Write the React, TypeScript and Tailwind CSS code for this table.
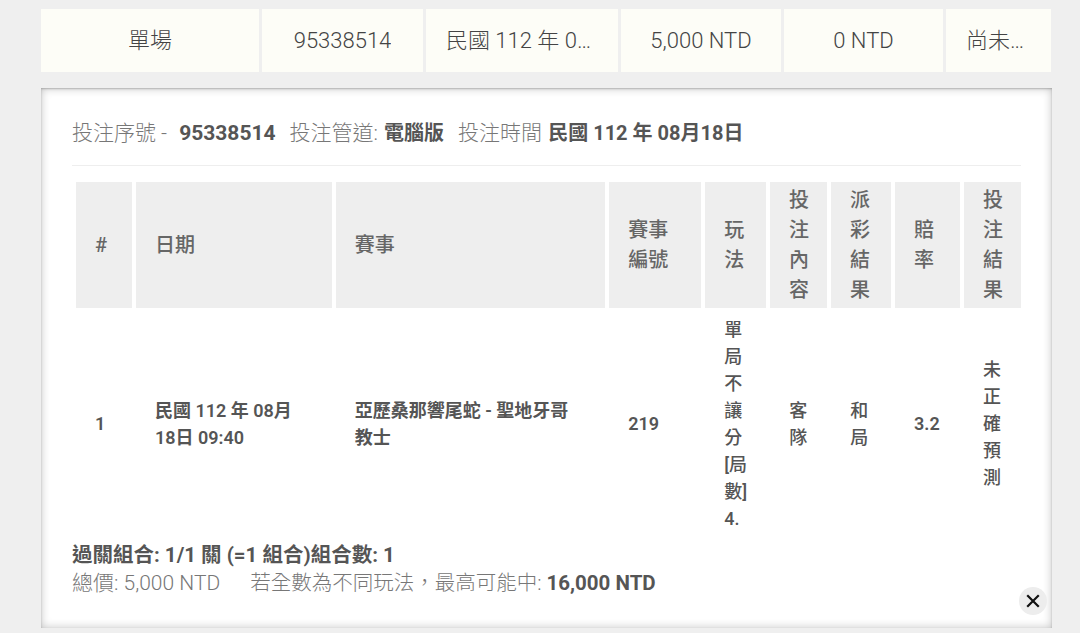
import React from "react";

const topCells: { text: string; w: string }[] = [
  { text: "單場", w: "w-[218px]" },
  { text: "95338514", w: "w-[161px]" },
  { text: "民國 112 年 08月18日", w: "w-[192px]" },
  { text: "5,000 NTD", w: "w-[160px]" },
  { text: "0 NTD", w: "w-[159px]" },
  { text: "尚未開始", w: "w-[105px]" },
];

const headers: { text: string; w: string }[] = [
  { text: "#", w: "w-[56px]" },
  { text: "日期", w: "w-[196px]" },
  { text: "賽事", w: "w-[270px]" },
  { text: "賽事編號", w: "w-[92px]" },
  { text: "玩法", w: "w-[61px]" },
  { text: "投注內容", w: "w-[57px]" },
  { text: "派彩結果", w: "w-[60px]" },
  { text: "賠率", w: "w-[65px]" },
  { text: "投注結果", w: "w-[57px]" },
];

const body: { text: string; cls: string }[] = [
  { text: "1", cls: "font-semibold" },
  { text: "民國 112 年 08月18日 09:40", cls: "font-semibold pr-[26px]" },
  { text: "亞歷桑那響尾蛇 - 聖地牙哥教士", cls: "font-semibold pr-[26px]" },
  { text: "219", cls: "font-semibold" },
  { text: "單局不讓分[局數]4.", cls: "font-medium break-all" },
  { text: "客隊", cls: "font-medium break-all" },
  { text: "和局", cls: "font-medium break-all" },
  { text: "3.2", cls: "font-semibold" },
  { text: "未正確預測", cls: "font-medium break-all" },
];

export default function App() {
  return (
    <div className="w-[1080px] h-[633px] bg-[#efefef] overflow-hidden font-[Roboto,'Noto_Sans_CJK_TC',sans-serif] pt-[9px] pl-[41px]">
      <div className="flex gap-[3px]">
        {topCells.map((c, i) => (
          <div
            key={i}
            className={`${c.w} h-[63px] bg-[#fdfdf7] flex items-center justify-center px-5 text-[22px] font-light text-[#444]`}
          >
            <span className="truncate block">{c.text}</span>
          </div>
        ))}
      </div>

      <div className="relative mt-[16px] w-[1011px] h-[540px] bg-white shadow-[inset_0_1px_2px_rgba(0,0,0,0.22),inset_0_0_10px_rgba(0,0,0,0.24)] pt-[30px] pl-[31px] pr-[31px]">
        <div className="text-[21px] leading-[30px] text-[#777] font-light whitespace-nowrap">
          投注序號 -<span className="ml-[12px] font-bold text-[#555]">95338514</span>
          <span className="ml-[14px]">投注管道: </span>
          <span className="ml-[1px] text-[20px] font-bold text-[#555]">電腦版</span>
          <span className="ml-[14px]">投注時間 </span>
          <span className="ml-[1px] text-[20px] font-bold text-[#555]">民國 112 年 08月18日</span>
        </div>
        <div className="mt-[17px] h-px bg-[#eeeeee]" />
        <div className="mt-[16px] ml-[4px] flex gap-[4px]">
          {headers.map((h, i) => (
            <div
              key={i}
              className={`${h.w} h-[126px] bg-[#eeeeee] flex items-center px-[19px] text-[20px] leading-[30px] text-[#666] font-medium`}
            >
              <span className="break-all">{h.text}</span>
            </div>
          ))}
        </div>
        <div className="mt-[4px] ml-[4px] flex gap-[4px] h-[223px]">
          {headers.map((h, i) => (
            <div
              key={i}
              className={`${h.w} flex items-center px-[19px] text-[18px] leading-[27px] text-[#555] ${body[i].cls}`}
            >
              <span>{body[i].text}</span>
            </div>
          ))}
        </div>
        <div className="mt-[6px] leading-[28px]">
          <div className="text-[20.5px] font-bold text-[#555]">過關組合: 1/1 關 (=1 組合)組合數: 1</div>
          <div className="text-[21px] text-[#777] font-light whitespace-nowrap">
            總價: 5,000 NTD
            <span className="ml-[30px] text-[20.5px]">若全數為不同玩法，最高可能中: </span>
            <span className="text-[20.5px] font-bold text-[#555]">16,000 NTD</span>
          </div>
        </div>
        <div className="absolute right-[5px] bottom-[13px] w-[28px] h-[28px] rounded-full bg-[#ededed] flex items-center justify-center">
          <svg width="14" height="14" viewBox="0 0 14 14">
            <path d="M2 2 L12 12 M12 2 L2 12" stroke="#111" strokeWidth="2.2" strokeLinecap="square" />
          </svg>
        </div>
      </div>
    </div>
  );
}
